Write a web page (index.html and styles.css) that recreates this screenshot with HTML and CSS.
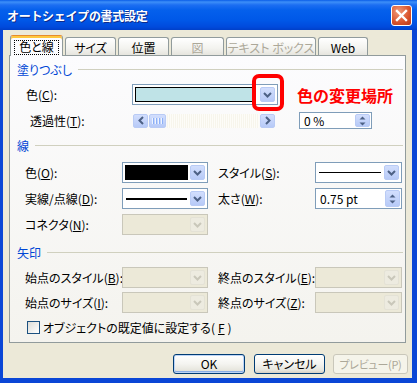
FILE: index.html
```html
<!DOCTYPE html>
<html lang="ja">
<head>
    <meta charset="UTF-8">
    <title>オートシェイプの書式設定</title>
    <link rel="stylesheet" href="styles.css">
</head>
<body>
    <div class="window">
        <div class="titlebar">
            <span class="title">オートシェイプの書式設定</span>
            <div class="close">
                <svg width="13" height="13" viewBox="0 0 13 13"><path d="M2 2 L11 11 M11 2 L2 11" stroke="#fff" stroke-width="2.4" stroke-linecap="square"/></svg>
            </div>
        </div>

        <div class="frame">
            <div class="tabs">
                <div class="tab active"><span class="focus">色と線</span></div>
                <div class="tab">サイズ</div>
                <div class="tab">位置</div>
                <div class="tab disabled">図</div>
                <div class="tab disabled">テキスト ボックス</div>
                <div class="tab">Web</div>
            </div>

            <div class="panel">
                <!-- 塗りつぶし -->
                <div class="group-title">塗りつぶし</div>
                <div class="fill-grid">
                    <label class="lbl">色(<u>C</u>):</label>
                    <div class="combo color-combo">
                        <div class="value"><span class="swatch swatch-aqua"></span></div>
                        <div class="drop"><svg width="9" height="6" viewBox="0 0 9 6"><path d="M1 1 L4.5 4.5 L8 1" fill="none" stroke="#4D6185" stroke-width="2"/></svg></div>
                        <div class="mark"></div>
                    </div>
                    <div class="note">色の変更場所</div>

                    <label class="lbl indent">透過性(<u>T</u>):</label>
                    <div class="hscroll">
                        <div class="sb-btn"><svg width="6" height="9" viewBox="0 0 6 9"><path d="M5 1 L1.5 4.5 L5 8" fill="none" stroke="#4D6185" stroke-width="2"/></svg></div>
                        <div class="thumb"><span></span><span></span><span></span><span></span></div>
                        <div class="track"></div>
                        <div class="sb-btn"><svg width="6" height="9" viewBox="0 0 6 9"><path d="M1 1 L4.5 4.5 L1 8" fill="none" stroke="#4D6185" stroke-width="2"/></svg></div>
                    </div>
                    <span></span>
                    <div class="spin short">
                        <div class="value">0 %</div>
                        <div class="spin-btn">
                            <svg width="7" height="4" viewBox="0 0 7 4"><path d="M0.5 3.5 L3.5 0.5 L6.5 3.5 Z" fill="#4D6185"/></svg>
                            <svg width="7" height="4" viewBox="0 0 7 4"><path d="M0.5 0.5 L3.5 3.5 L6.5 0.5 Z" fill="#4D6185"/></svg>
                        </div>
                    </div>
                </div>

                <!-- 線 -->
                <div class="group-title line-title">線</div>
                <div class="form-grid line-grid">
                    <label class="lbl">色(<u>O</u>):</label>
                    <div class="combo">
                        <div class="value"><span class="swatch swatch-black"></span></div>
                        <div class="drop"><svg width="9" height="6" viewBox="0 0 9 6"><path d="M1 1 L4.5 4.5 L8 1" fill="none" stroke="#4D6185" stroke-width="2"/></svg></div>
                    </div>
                    <span></span>
                    <label class="lbl">スタイル(<u>S</u>):</label>
                    <div class="combo">
                        <div class="value"><span class="stroke thin"></span></div>
                        <div class="drop"><svg width="9" height="6" viewBox="0 0 9 6"><path d="M1 1 L4.5 4.5 L8 1" fill="none" stroke="#4D6185" stroke-width="2"/></svg></div>
                    </div>

                    <label class="lbl">実線/点線(<u>D</u>):</label>
                    <div class="combo">
                        <div class="value"><span class="stroke thick"></span></div>
                        <div class="drop"><svg width="9" height="6" viewBox="0 0 9 6"><path d="M1 1 L4.5 4.5 L8 1" fill="none" stroke="#4D6185" stroke-width="2"/></svg></div>
                    </div>
                    <span></span>
                    <label class="lbl">太さ(<u>W</u>):</label>
                    <div class="spin">
                        <div class="value">0.75 pt</div>
                        <div class="spin-btn">
                            <svg width="7" height="4" viewBox="0 0 7 4"><path d="M0.5 3.5 L3.5 0.5 L6.5 3.5 Z" fill="#4D6185"/></svg>
                            <svg width="7" height="4" viewBox="0 0 7 4"><path d="M0.5 0.5 L3.5 3.5 L6.5 0.5 Z" fill="#4D6185"/></svg>
                        </div>
                    </div>

                    <label class="lbl">コネクタ(<u>N</u>):</label>
                    <div class="combo disabled">
                        <div class="value"></div>
                        <div class="drop"><svg width="9" height="6" viewBox="0 0 9 6"><path d="M1 1 L4.5 4.5 L8 1" fill="none" stroke="#C9C7BA" stroke-width="2"/></svg></div>
                    </div>
                </div>

                <!-- 矢印 -->
                <div class="group-title arrow-title">矢印</div>
                <div class="form-grid arrow-grid">
                    <label class="lbl">始点のスタイル(<u>B</u>):</label>
                    <div class="combo disabled">
                        <div class="value"></div>
                        <div class="drop"><svg width="9" height="6" viewBox="0 0 9 6"><path d="M1 1 L4.5 4.5 L8 1" fill="none" stroke="#C9C7BA" stroke-width="2"/></svg></div>
                    </div>
                    <span></span>
                    <label class="lbl">終点のスタイル(<u>E</u>):</label>
                    <div class="combo disabled">
                        <div class="value"></div>
                        <div class="drop"><svg width="9" height="6" viewBox="0 0 9 6"><path d="M1 1 L4.5 4.5 L8 1" fill="none" stroke="#C9C7BA" stroke-width="2"/></svg></div>
                    </div>

                    <label class="lbl">始点のサイズ(<u>I</u>):</label>
                    <div class="combo disabled">
                        <div class="value"></div>
                        <div class="drop"><svg width="9" height="6" viewBox="0 0 9 6"><path d="M1 1 L4.5 4.5 L8 1" fill="none" stroke="#C9C7BA" stroke-width="2"/></svg></div>
                    </div>
                    <span></span>
                    <label class="lbl">終点のサイズ(<u>Z</u>):</label>
                    <div class="combo disabled">
                        <div class="value"></div>
                        <div class="drop"><svg width="9" height="6" viewBox="0 0 9 6"><path d="M1 1 L4.5 4.5 L8 1" fill="none" stroke="#C9C7BA" stroke-width="2"/></svg></div>
                    </div>
                </div>

                <label class="check-row">
                    <span class="check"></span>
                    オブジェクトの既定値に設定する(<u>F</u>)
                </label>
            </div>

            <div class="buttons">
                <button class="btn default">OK</button>
                <button class="btn cancel">キャンセル</button>
                <button class="btn preview" disabled>プレビュー(P)</button>
            </div>
        </div>
    </div>
</body>
</html>
```

FILE: styles.css
```css
* {
    box-sizing: border-box;
}

body {
    margin: 0;
    background: #fff;
    font-family: "Noto Sans CJK JP", sans-serif;
    font-size: 12px;
    color: #000;
    font-feature-settings: "palt";
}

.window {
    width: 417px;
    height: 383px;
    display: flex;
    flex-direction: column;
}

/* Title bar */
.titlebar {
    height: 30px;
    flex: none;
    display: flex;
    align-items: center;
    justify-content: space-between;
    padding: 0 5px 0 7px;
    background: linear-gradient(#0A5DE8 0, #3D8FF8 2px, #1C6EF2 5px, #0560EC 10px, #0058E8 20px, #004ADC 27px, #003FC8 30px);
}

.title {
    color: #fff;
    font-weight: bold;
    font-size: 12px;
    font-feature-settings: normal;
    letter-spacing: -0.3px;
    text-shadow: 1px 1px #0F2A8A;
}

.close {
    width: 21px;
    height: 21px;
    border: 1px solid #fff;
    border-radius: 3px;
    background: radial-gradient(circle at 35% 30%, #F09A7A, #D9532C 60%, #B8381A);
    display: flex;
    align-items: center;
    justify-content: center;
}

/* Window frame */
.frame {
    flex: 1;
    display: flex;
    flex-direction: column;
    background: #ECE9D8;
    border-style: solid;
    border-color: #0A46D6;
    border-width: 0 5px 5px 3px;
}

/* Tabs */
.tabs {
    height: 25px;
    flex: none;
    display: flex;
    align-items: flex-end;
    padding-left: 7px;
}

.tab {
    height: 18px;
    margin-right: 2px;
    border: 1px solid #919B9C;
    border-bottom: none;
    border-radius: 3px 3px 0 0;
    background: linear-gradient(#FFFFFF, #F3F3EF 60%, #E6E5DE);
    display: flex;
    align-items: center;
    justify-content: center;
    padding-top: 1px;
    white-space: nowrap;
}

.tab:nth-child(1) { width: 53px; }
.tab:nth-child(2) { width: 51px; }
.tab:nth-child(3) { width: 51px; }
.tab:nth-child(4) { width: 53px; }
.tab:nth-child(5) { width: 90px; }
.tab:nth-child(6) { width: 50px; }

.tab.active {
    height: 21px;
    margin-bottom: -1px;
    position: relative;
    z-index: 1;
    background: #FCFCFE;
    border-top: 1px solid #E68B2C;
    box-shadow: inset 0 2px #FFC83C;
    padding-top: 2px;
}

.tab.disabled {
    color: #ACA899;
}

.focus {
    border: 1px dotted #000;
    padding: 0 4px;
    line-height: 12px;
    height: 15px;
    display: flex;
    align-items: center;
}

/* Tab page */
.panel {
    height: 288px;
    margin: 0 6px;
    border: 1px solid #919B9C;
    background: linear-gradient(#FCFCFE, #F4F3EE);
    padding: 6px 2px 0 7px;
}

.group-title {
    height: 14px;
    display: flex;
    align-items: center;
    color: #0046D5;
}

.group-title::after {
    content: "";
    flex: 1;
    height: 1px;
    background: #D0D0BF;
    margin-left: 6px;
}

.lbl {
    align-self: center;
    white-space: nowrap;
}

.lbl.indent {
    padding-left: 4px;
}

.fill-grid {
    display: grid;
    grid-template-columns: 106px 146px 21px 73px;
    grid-template-rows: 21px 17px;
    row-gap: 7px;
    margin: 8px 0 0 9px;
}

.line-title {
    margin-top: 9px;
}

.arrow-title {
    margin-top: 10px;
}

.form-grid {
    display: grid;
    grid-template-columns: 97px 86px 10px 97px 87px;
    margin-left: 8px;
}

.line-grid {
    grid-template-rows: 21px 21px 21px;
    row-gap: 5px;
    margin-top: 10px;
}

.arrow-grid {
    grid-template-rows: 21px 21px;
    row-gap: 4px;
    margin-top: 8px;
}

/* Combo box */
.combo {
    height: 21px;
    border: 1px solid #7F9DB9;
    background: #fff;
    display: flex;
    padding: 2px;
    gap: 2px;
    position: relative;
}

.combo .value {
    flex: 1;
    display: flex;
    align-items: center;
}

.drop {
    width: 15px;
    flex: none;
    border: 1px solid #B9CBF5;
    border-radius: 2px;
    background: linear-gradient(#D2DEFD, #B7CAF7);
    display: flex;
    align-items: center;
    justify-content: center;
}

.combo.disabled {
    border-color: #C9C7BA;
    background: #ECE9D8;
}

.combo.disabled .drop {
    border-color: #E4E2D6;
    background: #EDEBE0;
}

.swatch {
    display: block;
    width: 100%;
    height: 100%;
    border: 1px solid #000;
}

.swatch-aqua {
    background: #BFE3E7;
    margin-right: 3px;
}

.swatch-black {
    background: #000;
}

.stroke {
    display: block;
    width: 100%;
    background: #000;
    margin: 0 1px;
}

.stroke.thin { height: 1px; }
.stroke.thick { height: 2px; }

/* Red annotation */
.mark {
    position: absolute;
    left: 119px;
    top: -11px;
    width: 32px;
    height: 37px;
    border: 4px solid #F00;
    border-radius: 7px;
}

.note {
    grid-column: 3 / 5;
    align-self: center;
    padding-left: 19px;
    color: #F00;
    font-weight: bold;
    font-size: 16px;
    font-feature-settings: normal;
    white-space: nowrap;
}

/* Scrollbar */
.hscroll {
    align-self: center;
    height: 14px;
    margin: 0 3px 0 1px;
    display: flex;
    gap: 1px;
}

.sb-btn, .thumb {
    border: 1px solid #B9CBF5;
    border-radius: 2px;
    background: linear-gradient(#D2DEFD, #B7CAF7);
    display: flex;
    align-items: center;
    justify-content: center;
}

.sb-btn {
    width: 15px;
}

.thumb {
    width: 17px;
    gap: 1px;
}

.thumb span {
    width: 1px;
    height: 6px;
    background: #EEF4FE;
    box-shadow: 1px 0 #8CB0F8;
    margin-right: 1px;
}

.track {
    flex: 1;
    background: repeating-linear-gradient(90deg, #F7F5EC 0 1px, #FDFCF8 1px 2px);
}

/* Spin edit */
.spin {
    height: 21px;
    border: 1px solid #7F9DB9;
    background: #fff;
    display: flex;
    padding: 1px;
    align-items: stretch;
}

.spin.short {
    height: 17px;
}

.spin .value {
    flex: 1;
    display: flex;
    align-items: center;
    padding-left: 3px;
    font-feature-settings: normal;
}

.spin-btn {
    width: 15px;
    border: 1px solid #B9CBF5;
    border-radius: 2px;
    background: linear-gradient(#D2DEFD, #B7CAF7);
    display: flex;
    flex-direction: column;
    align-items: center;
    justify-content: center;
    gap: 2px;
}

/* Checkbox */
.check-row {
    display: flex;
    align-items: center;
    gap: 3px;
    height: 16px;
    margin: 6px 0 0 10px;
}

.check {
    width: 13px;
    height: 13px;
    border: 1px solid #1C5180;
    background: linear-gradient(135deg, #DCDCD7, #FFFFFF);
}

/* Dialog buttons */
.buttons {
    display: flex;
    justify-content: flex-end;
    padding: 11px 4px 0 0;
}

.btn {
    height: 20px;
    margin-left: 9px;
    border: 1px solid #003C74;
    border-radius: 3px;
    background: linear-gradient(#FFFFFF, #F4F4F0 50%, #E6E5DD 85%, #D6D0C5);
    font-family: inherit;
    font-size: 12px;
    font-feature-settings: "palt";
    line-height: 16px;
    padding: 0;
    color: #000;
    white-space: nowrap;
}

.btn.default {
    width: 72px;
    box-shadow: inset 0 0 0 1px #BCD4F6, inset 0 -1px 0 1px #89ADE4;
}

.btn.cancel {
    width: 71px;
}

.btn.preview {
    width: 75px;
    margin-left: 8px;
    border-color: #C9C7BA;
    background: #F5F4EA;
    color: #ACA899;
    font-size: 11px;
    letter-spacing: -0.3px;
}
```
